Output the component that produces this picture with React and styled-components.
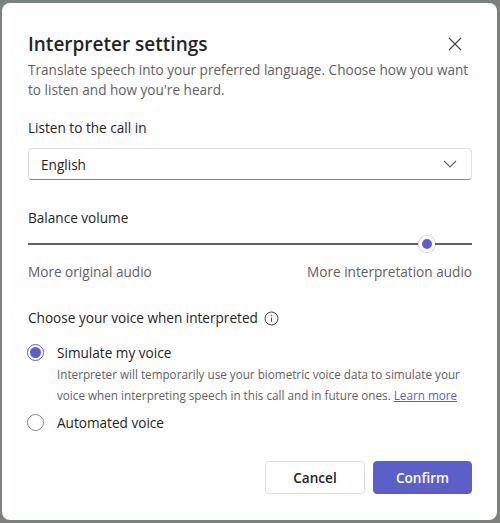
import React from "react";
import styled, { createGlobalStyle } from "styled-components";

const Global = createGlobalStyle`
  html, body { margin: 0; padding: 0; height: 523px; overflow: hidden; background: #7b817d; }
  #root { height: 523px; }
  * { box-sizing: border-box; }
`;

const Backdrop = styled.div`
  height: 523px;
  padding: 3px 3px 3px 2px;
  font-family: "Open Sans", "Noto Sans", sans-serif;
  color: #242424;
`;

const Dialog = styled.div`
  height: 517px;
  background: #fff;
  border-radius: 8px;
  padding: 28px 25px 0 26px;
  display: flex;
  flex-direction: column;
`;

const Header = styled.div`
  display: flex;
  align-items: center;
  justify-content: space-between;
  height: 26px;
`;

const Title = styled.h1`
  margin: 0;
  font-size: 19px;
  font-weight: 600;
  line-height: 26px;
  color: #242424;
`;

const CloseButton = styled.button`
  width: 16px;
  height: 16px;
  margin-right: 9px;
  padding: 0;
  border: 0;
  background: none;
  display: flex;
`;

const Description = styled.p`
  margin: 3px 0 0;
  font-size: 13.6px;
  line-height: 20px;
  color: #616161;
`;

const Label = styled.div`
  font-size: 13.6px;
  line-height: 20px;
  color: #242424;
  margin-top: ${(p) => p.$top}px;
`;

const Select = styled.div`
  margin-top: 10px;
  height: 32px;
  border: 1px solid #e0e0e0;
  border-bottom-color: #8a8a8a;
  border-radius: 4px;
  padding: 0 14px 0 12px;
  display: flex;
  align-items: center;
  justify-content: space-between;
  font-size: 13.6px;
`;

const Slider = styled.div`
  margin-top: 6px;
  height: 20px;
  display: flex;
  align-items: center;
`;

const TrackFill = styled.div`
  flex: 1;
  height: 2px;
  background: #616161;
`;

const TrackRest = styled.div`
  width: 37px;
  height: 2px;
  background: #616161;
`;

const Thumb = styled.div`
  width: 16px;
  height: 16px;
  border-radius: 50%;
  background: #5b5fc7;
  border: 3px solid #fff;
  box-shadow: 0 0 0 1px #d6d6e4;
  flex: none;
`;

const ScaleLabels = styled.div`
  margin-top: 8px;
  display: flex;
  justify-content: space-between;
  font-size: 13.6px;
  line-height: 20px;
  color: #616161;
`;

const InfoRow = styled.div`
  margin-top: 26px;
  display: flex;
  align-items: center;
  gap: 6px;
  font-size: 13.6px;
  line-height: 20px;
`;

const RadioRow = styled.div`
  display: flex;
  align-items: center;
  gap: 13px;
  height: 20px;
  margin-top: ${(p) => p.$top}px;
  margin-left: -1px;
  font-size: 13.6px;
`;

const RadioCircle = styled.span`
  width: 17px;
  height: 17px;
  border-radius: 50%;
  flex: none;
  border: 1px solid ${(p) => (p.$on ? "#5b5fc7" : "#8a8a8a")};
  display: flex;
  align-items: center;
  justify-content: center;

  &::after {
    content: "";
    width: 11px;
    height: 11px;
    border-radius: 50%;
    background: ${(p) => (p.$on ? "#5b5fc7" : "transparent")};
  }
`;

const RadioHelp = styled.p`
  margin: 2px 0 0 29px;
  font-size: 11.7px;
  line-height: 21px;
  color: #616161;
`;

const LearnMore = styled.a`
  color: #5b5fc7;
  text-decoration: underline;
`;

const Footer = styled.div`
  margin-top: auto;
  margin-bottom: 26px;
  display: flex;
  justify-content: flex-end;
  gap: 8px;
`;

const Button = styled.button`
  width: ${(p) => p.$width}px;
  height: 33px;
  border-radius: 4px;
  border: 1px solid ${(p) => (p.$primary ? "#5b5fc7" : "#e0e0e0")};
  background: ${(p) => (p.$primary ? "#5b5fc7" : "#fff")};
  color: ${(p) => (p.$primary ? "#fff" : "#242424")};
  font-family: inherit;
  font-size: 13.6px;
  font-weight: 600;
  padding: 0;
`;

export default function App() {
  return (
    <>
      <Global />
      <Backdrop>
        <Dialog>
          <Header>
            <Title>Interpreter settings</Title>
            <CloseButton aria-label="Close">
              <svg width="16" height="16" viewBox="0 0 16 16" fill="none" stroke="#424242" strokeWidth="1.1">
                <path d="M2 2l12 12M14 2L2 14" />
              </svg>
            </CloseButton>
          </Header>
          <Description>
            Translate speech into your preferred language. Choose how you want
            <br />
            to listen and how you're heard.
          </Description>
          <Label $top={18}>Listen to the call in</Label>
          <Select>
            English
            <svg width="14" height="8" viewBox="0 0 14 8" fill="none" stroke="#616161" strokeWidth="1.1">
              <path d="M1 1l6 6 6-6" />
            </svg>
          </Select>
          <Label $top={28}>Balance volume</Label>
          <Slider>
            <TrackFill />
            <Thumb />
            <TrackRest />
          </Slider>
          <ScaleLabels>
            <span>More original audio</span>
            <span>More interpretation audio</span>
          </ScaleLabels>
          <InfoRow>
            Choose your voice when interpreted
            <svg width="15" height="15" viewBox="0 0 15 15" fill="none" stroke="#424242">
              <circle cx="7.5" cy="7.5" r="6.5" />
              <path d="M7.5 6.6v4.2" />
              <circle cx="7.5" cy="4.5" r="0.5" fill="#424242" strokeWidth="0.5" />
            </svg>
          </InfoRow>
          <RadioRow $top={14}>
            <RadioCircle $on />
            Simulate my voice
          </RadioRow>
          <RadioHelp>
            Interpreter will temporarily use your biometric voice data to simulate your
            <br />
            voice when interpreting speech in this call and in future ones. <LearnMore>Learn more</LearnMore>
          </RadioHelp>
          <RadioRow $top={6}>
            <RadioCircle />
            Automated voice
          </RadioRow>
          <Footer>
            <Button $width={100}>Cancel</Button>
            <Button $width={99} $primary>Confirm</Button>
          </Footer>
        </Dialog>
      </Backdrop>
    </>
  );
}
